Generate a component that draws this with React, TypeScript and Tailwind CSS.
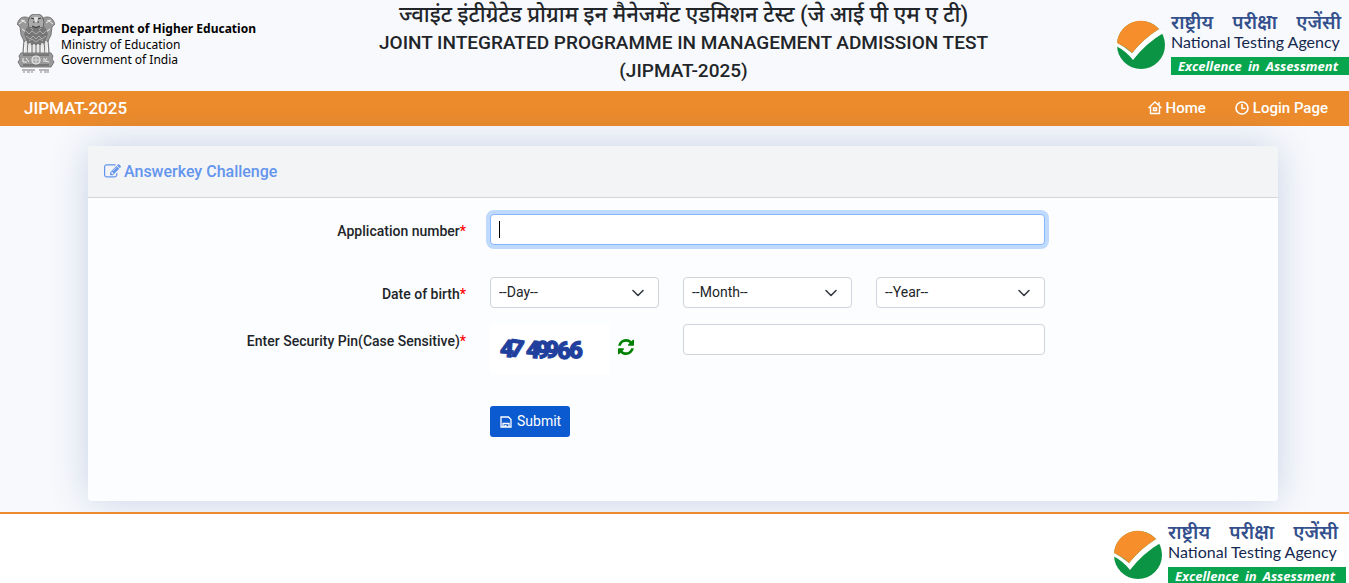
import type { ReactNode } from "react";

const FONT = 'font-["Roboto","Noto_Sans",sans-serif]';

function Emblem() {
  return (
    <svg viewBox="0 0 38 60" className="h-15 w-[38px] shrink-0" aria-hidden="true">
      {/* side lions */}
      <path d="M12 4C8 2 4 3 2 6L0 10l3 3 1 8 3 6 6 3zM26 4c4-2 8-1 10 2l2 4-3 3-1 8-3 6-6 3z" fill="#999" stroke="#666" strokeWidth="0.8" />
      <path d="M2 10l4-3 3 2M36 10l-4-3-3 2M5 15l4 3M33 15l-4 3M4 6l4 1M34 6l-4 1" stroke="#eee" fill="none" />
      {/* front lion */}
      <path d="M13 2l3-2h6l3 2 2 6-1 6H12l-1-6z" fill="#aaa" stroke="#555" strokeWidth="0.8" />
      <path d="M10 13h18l3 7-3 8-4 3H14l-4-3-3-8z" fill="#767676" />
      <path d="M14 4l3 1M24 4l-3 1M16 8h1.500M20.500 8h1.500M15 12q4 3 8 0" stroke="#333" fill="none" />
      <path d="M17 3h4l-1 5h-2z" fill="#e5e5e5" />
      <path d="M9 17l3 3 3-3 4 3 4-3 3 3 3-3M9 22l4 3 3-3 3 3 3-3 3 3 4-3M14 14l2 2M24 14l-2 2M12 27l3-2 4 3 4-3 3 2" stroke="#bdbdbd" strokeWidth="0.8" fill="none" />
      {/* legs */}
      <path d="M7 26l-1 13M11 28l-1 11M15 29v11M19 30v10M23 29v11M27 28l1 11M31 26l1 13" stroke="#777" strokeWidth="1.2" fill="none" />
      <path d="M9 27v12M13 29l-1 10M17 30v9M21 30v9M25 29l1 10M29 27v12" stroke="#e5e5e5" strokeWidth="1.6" fill="none" />
      {/* abacus */}
      <path d="M4 39h30l2 3-1 3 2 3-3 5H4l-3-5 2-3-1-3z" fill="#9a9a9a" stroke="#666" strokeWidth="0.8" />
      <path d="M6 41h26M6 51h26" stroke="#555" fill="none" />
      <circle cx="19" cy="46" r="4" fill="#aaa" stroke="#eee" strokeWidth="1.2" />
      <path d="M19 43v6M16 46h6" stroke="#eee" strokeWidth="0.7" />
      <path d="M6 44v4h4M9 44l3 4M27 44v4M30 44l-2 3 4 1" stroke="#eee" fill="none" />
      <path d="M5 56h13M22 56h10" stroke="#777" />
      <path d="M6 58h2M10 58h3M15 57v2M23 58h2M27 58h3M31 57v2" stroke="#888" />
    </svg>
  );
}

function NtaLogo() {
  return (
    <div className="flex h-[64px] w-[233px] shrink-0">
      <svg viewBox="0 0 50 50" className="mt-[8px] size-[50px] shrink-0" aria-hidden="true">
        <circle cx="25" cy="25" r="24" fill="#0a9444" />
        <path d="M0 22Q9 27 16 33Q28 18 43 9L49 12Q30 23 17 40Q10 31 0 26z" fill="#fff" />
        <path d="M1 23A24 24 0 0 1 43 9Q27 19 16 33Q10 27 1 23z" fill="#f68e2c" />
      </svg>
      <div className="ml-[5px] flex flex-1 flex-col whitespace-nowrap">
        <span className="mr-2 flex h-5 justify-between font-['Noto_Sans','Noto_Sans_Devanagari',sans-serif] text-[19px] leading-[20px] font-semibold text-[#34508c]">
          <span>राष्ट्रीय</span> <span>परीक्षा</span> <span>एजेंसी</span>
        </span>
        <span className="h-[25px] font-['Lato',sans-serif] text-[16px] leading-[20px] text-[#14284f]">
          National Testing Agency
        </span>
        <span className="flex h-[18px] justify-between bg-[#08a54f] pr-[11px] pl-[7px] font-['Open_Sans',sans-serif] text-[13px] leading-[18px] font-bold text-white italic">
          <span>Excellence</span> <span>in</span> <span>Assessment</span>
        </span>
      </div>
    </div>
  );
}

function HomeIcon() {
  return (
    <svg viewBox="0 0 14 14" className="size-[14px]" fill="none" stroke="currentColor" strokeWidth="1.4" aria-hidden="true">
      <path d="M0.5 7L7 1l6.500 6M2.500 6v6.500h9V6M11 1v3" />
      <path d="M5.500 7h3v2.500h-3z" />
    </svg>
  );
}

function ClockIcon() {
  return (
    <svg viewBox="0 0 14 14" className="size-[14px]" fill="none" stroke="currentColor" strokeWidth="1.6" aria-hidden="true">
      <circle cx="7" cy="7" r="6" />
      <path d="M7 3v4.500h3.500" />
    </svg>
  );
}

function SaveIcon() {
  return (
    <svg viewBox="0 0 12 12" className="size-3" fill="none" stroke="currentColor" strokeWidth="1.3" aria-hidden="true">
      <path d="M1 1h7.500L11 3.500V11H1zM3 11V7.500h6V11" />
      <path d="M4.500 9h2v2h-2z" fill="currentColor" stroke="none" />
    </svg>
  );
}

function EditIcon() {
  return (
    <svg viewBox="0 0 1792 1792" className="size-[17px]" fill="currentColor" aria-hidden="true">
      <path d="M888 1184l116-116-152-152-116 116v56h96v96h56zm440-720q-16-16-33 1l-350 350q-17 17-1 33t33-1l350-350q17-17 1-33zm80 594v190q0 119-84.5 203.5t-203.5 84.5h-832q-119 0-203.5-84.5t-84.5-203.5v-832q0-119 84.5-203.5t203.5-84.5h832q63 0 117 25 15 7 18 23 3 17-9 29l-49 49q-14 14-32 8-23-6-45-6h-832q-66 0-113 47t-47 113v832q0 66 47 113t113 47h832q66 0 113-47t47-113v-126q0-13 9-22l64-64q15-15 35-7t20 29zm-96-738l288 288-672 672h-288v-288zm444 132l-92 92-288-288 92-92q28-28 68-28t68 28l152 152q28 28 28 68t-28 68z" />
    </svg>
  );
}

function RefreshIcon() {
  return (
    <svg viewBox="128 128 1536 1536" className="size-4" fill="currentColor" aria-hidden="true">
      <path d="M1639 1056q0 5-1 7-64 268-268 434.500t-478 166.500q-146 0-282.500-55t-243.500-157l-129 129q-19 19-45 19t-45-19-19-45v-448q0-26 19-45t45-19h448q26 0 45 19t19 45-19 45l-137 137q71 66 161 102t187 36q134 0 250-65t186-179q11-17 53-117 8-23 30-23h192q13 0 22.500 9.500t9.500 22.500zm25-800v448q0 26-19 45t-45 19h-448q-26 0-45-19t-19-45 19-45l138-138q-148-137-349-137-134 0-250 65t-186 179q-11 17-53 117-8 23-30 23h-199q-13 0-22.500-9.500t-9.500-22.500v-7q65-268 270-434.500t480-166.500q146 0 284 55.500t245 156.500l130-129q19-19 45-19t45 19 19 45z" />
    </svg>
  );
}

const captcha = [
  { digit: "4", x: 10, y: 33, angle: 4 },
  { digit: "7", x: 20, y: 33, angle: 8 },
  { digit: "4", x: 36, y: 34, angle: 4 },
  { digit: "9", x: 46, y: 34, angle: -4 },
  { digit: "9", x: 55, y: 34, angle: 4 },
  { digit: "6", x: 67, y: 35, angle: -5 },
  { digit: "6", x: 79, y: 34, angle: 5 },
];

function Captcha() {
  return (
    <svg viewBox="0 0 120 50" className="h-[50px] w-[120px] bg-white" role="img" aria-label="Security pin">
      {captcha.map((c, i) => (
        <text
          key={i}
          x={c.x}
          y={c.y}
          transform={`rotate(${c.angle} ${c.x + 6} ${c.y - 7})`}
          className="fill-[#213f9c] stroke-[#213f9c] font-['Roboto',sans-serif] text-[24px] font-black"
        >
          {c.digit}
        </text>
      ))}
    </svg>
  );
}

function Label({ htmlFor, children }: { htmlFor: string; children: ReactNode }) {
  return (
    <label htmlFor={htmlFor} className="col-span-2 px-3 pt-[7px] text-right font-medium">
      {children}
      <span className="text-[#ff0000]">*</span>
    </label>
  );
}

function DateSelect({ id, label }: { id: string; label: string }) {
  return (
    <div className="relative mx-3">
      <select
        id={id}
        aria-label={label}
        className="h-[31px] w-full appearance-none rounded-[4px] border border-[#ced4da] bg-white px-2 text-[14px] leading-[21px] text-[#212529]"
      >
        <option>--{label}--</option>
      </select>
      <svg viewBox="0 0 16 16" className="pointer-events-none absolute top-2 right-[13px] size-4" fill="none" stroke="#343a40" strokeWidth="1.6" strokeLinecap="round" strokeLinejoin="round" aria-hidden="true">
        <path d="M3 5.500l5 5 5-5" />
      </svg>
    </div>
  );
}

export default function App() {
  return (
    <div className={`${FONT} bg-[#f8f9fc] text-[14px] leading-[21px] text-[#212529]`}>
      <header className="flex h-[91px] items-start justify-between">
        <div className="flex w-[298px] shrink-0 pt-[14px] pl-[17px]">
          <Emblem />
          <p className="ml-[6px] pt-[7px] font-['Noto_Sans',sans-serif] text-[12px] leading-[15px] whitespace-nowrap text-black">
            <strong className="block leading-[16px]">Department of Higher Education</strong>
            Ministry of Education
            <br />
            Government of India
          </p>
        </div>
        <h1 className="flex-1 text-center text-[19px] leading-[28px] font-medium">
          <span lang="hi" className="block text-[22px] leading-[29px]">
            ज्वाइंट इंटीग्रेटेड प्रोग्राम इन मैनेजमेंट एडमिशन टेस्ट (जे आई पी एम ए टी)
          </span>
          JOINT INTEGRATED PROGRAMME IN MANAGEMENT ADMISSION TEST
          <br />
          (JIPMAT-2025)
        </h1>
        <div className="flex w-[280px] shrink-0 justify-end pt-[12px]">
          <NtaLogo />
        </div>
      </header>

      <nav className="flex h-[35px] items-center justify-between bg-[#eb8b2c] pr-[21px] pb-[2px] pl-6 text-[15px] leading-[24px] font-medium text-white">
        <a href="#" className="text-[17px]">
          JIPMAT-2025
        </a>
        <div className="flex gap-[29px]">
          <a href="#" className="flex items-center gap-1">
            <HomeIcon />
            Home
          </a>
          <a href="#" className="flex items-center gap-1">
            <ClockIcon />
            Login Page
          </a>
        </div>
      </nav>

      <main className="pt-5 pr-[71px] pb-[11px] pl-[88px]">
        <section className="rounded-[4px] bg-[#fcfdff] pb-16 shadow-[0_0_40px_rgba(8,60,150,0.2)]">
          <h2 className="flex h-[52px] items-center gap-[3px] rounded-t-[4px] border-b border-[#d2d5d9] bg-[#f3f4f6] px-4 text-[16px] font-medium text-[#6495ed]">
            <EditIcon />
            Answerkey Challenge
          </h2>
          <form className="grid grid-cols-6 pt-4 pr-7 pl-1">
            <Label htmlFor="appno">Application number</Label>
            <div className="relative col-span-3 mx-3 mb-8">
              <input
                id="appno"
                type="text"
                className="h-[31px] w-full rounded-[4px] border border-[#86b7fe] bg-white px-2 caret-transparent shadow-[0_0_0_4px_#c0dafe] outline-none"
              />
              <span className="absolute top-[7px] left-[9px] h-[17px] w-px bg-black" />
            </div>

            <div className="col-span-2 col-start-1 grid">
              <Label htmlFor="day">Date of birth</Label>
            </div>
            <DateSelect id="day" label="Day" />
            <DateSelect id="month" label="Month" />
            <DateSelect id="year" label="Year" />

            <div className="col-span-2 col-start-1 mt-4 grid">
              <Label htmlFor="pin">Enter Security Pin(Case Sensitive)</Label>
            </div>
            <div className="mt-4 ml-3 flex gap-2">
              <Captcha />
              <button type="button" aria-label="Refresh pin" className="h-[46px] text-[#008000]">
                <RefreshIcon />
              </button>
            </div>
            <div className="col-span-2 mx-3 mt-4">
              <input id="pin" type="text" className="h-[31px] w-full rounded-[4px] border border-[#ced4da] bg-white px-2" />
            </div>

            <div className="col-span-2 col-start-3 mt-8 ml-3">
              <button type="submit" className="flex h-[31px] items-center gap-[5px] rounded-[3px] bg-[#0b5acf] pr-[9px] pl-[10px] text-white">
                <SaveIcon />
                Submit
              </button>
            </div>
          </form>
        </section>
      </main>

      <footer className="flex justify-end border-t-2 border-[#eb8b2c] bg-white pt-2 pr-[3px]">
        <NtaLogo />
      </footer>
    </div>
  );
}
